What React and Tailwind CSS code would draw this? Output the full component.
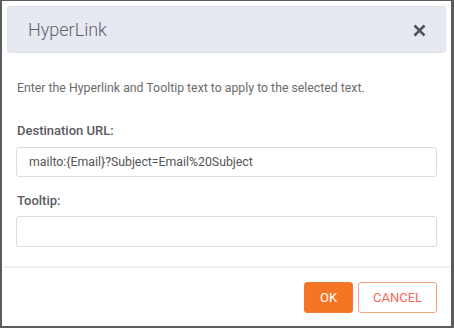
import React from "react";

export default function App() {
  return (
    <div className="w-[454px] h-[328px] bg-[#5c5c5c] pl-[2px] pt-[1px] pr-[3px] pb-[2px]" style={{ fontFamily: "Roboto, 'Liberation Sans', sans-serif" }}>
      <div className="w-full h-full bg-white flex flex-col">
        <div className="px-[5px] pt-[5px]">
          <div className="h-[47px] bg-[#e7e9f0] rounded-[3px] border border-[#dfe2ea] flex items-center justify-between pl-[20px] pr-[19px]">
            <span className="text-[18px] font-light text-[#616270]">HyperLink</span>
            <svg width="13" height="13" viewBox="0 0 13 13" className="mt-[1px]">
              <path d="M1.5 1.5 L11.5 11.5 M11.5 1.5 L1.5 11.5" stroke="#4b5563" strokeWidth="2.6" strokeLinecap="butt" />
            </svg>
          </div>
        </div>
        <div className="px-[14px] pt-[27px]">
          <p className="text-[12.3px] text-[#6b6b6b] leading-[16px] pl-[1px]">Enter the Hyperlink and Tooltip text to apply to the selected text.</p>
          <label className="block mt-[27px] text-[13px] font-medium text-[#5a5b61] leading-[16px] pl-[1px]">Destination URL:</label>
          <div className="mt-[8px] h-[30px] border border-[#dcdcdc] rounded-[3px] flex items-center pl-[12px] text-[12.3px] text-[#555]">
            mailto:{"{Email}"}?Subject=Email%20Subject
          </div>
          <label className="block mt-[16px] text-[13px] font-medium text-[#5a5b61] leading-[16px] pl-[1px]">Tooltip:</label>
          <div className="mt-[7px] h-[31px] border border-[#dcdcdc] rounded-[3px]"></div>
        </div>
        <div className="mt-[19px] h-[2px] bg-[#efefef] mx-[1px]"></div>
        <div className="flex justify-end gap-[5px] pr-[14px] pt-[14px]">
          <button className="w-[49px] h-[31px] rounded-[3px] bg-[#f47523] text-white text-[13px] border border-[#ef7a35]">OK</button>
          <button className="w-[79px] h-[31px] rounded-[3px] bg-white text-[#f2685a] text-[13px] border border-[#f5a57a]">CANCEL</button>
        </div>
      </div>
    </div>
  );
}
